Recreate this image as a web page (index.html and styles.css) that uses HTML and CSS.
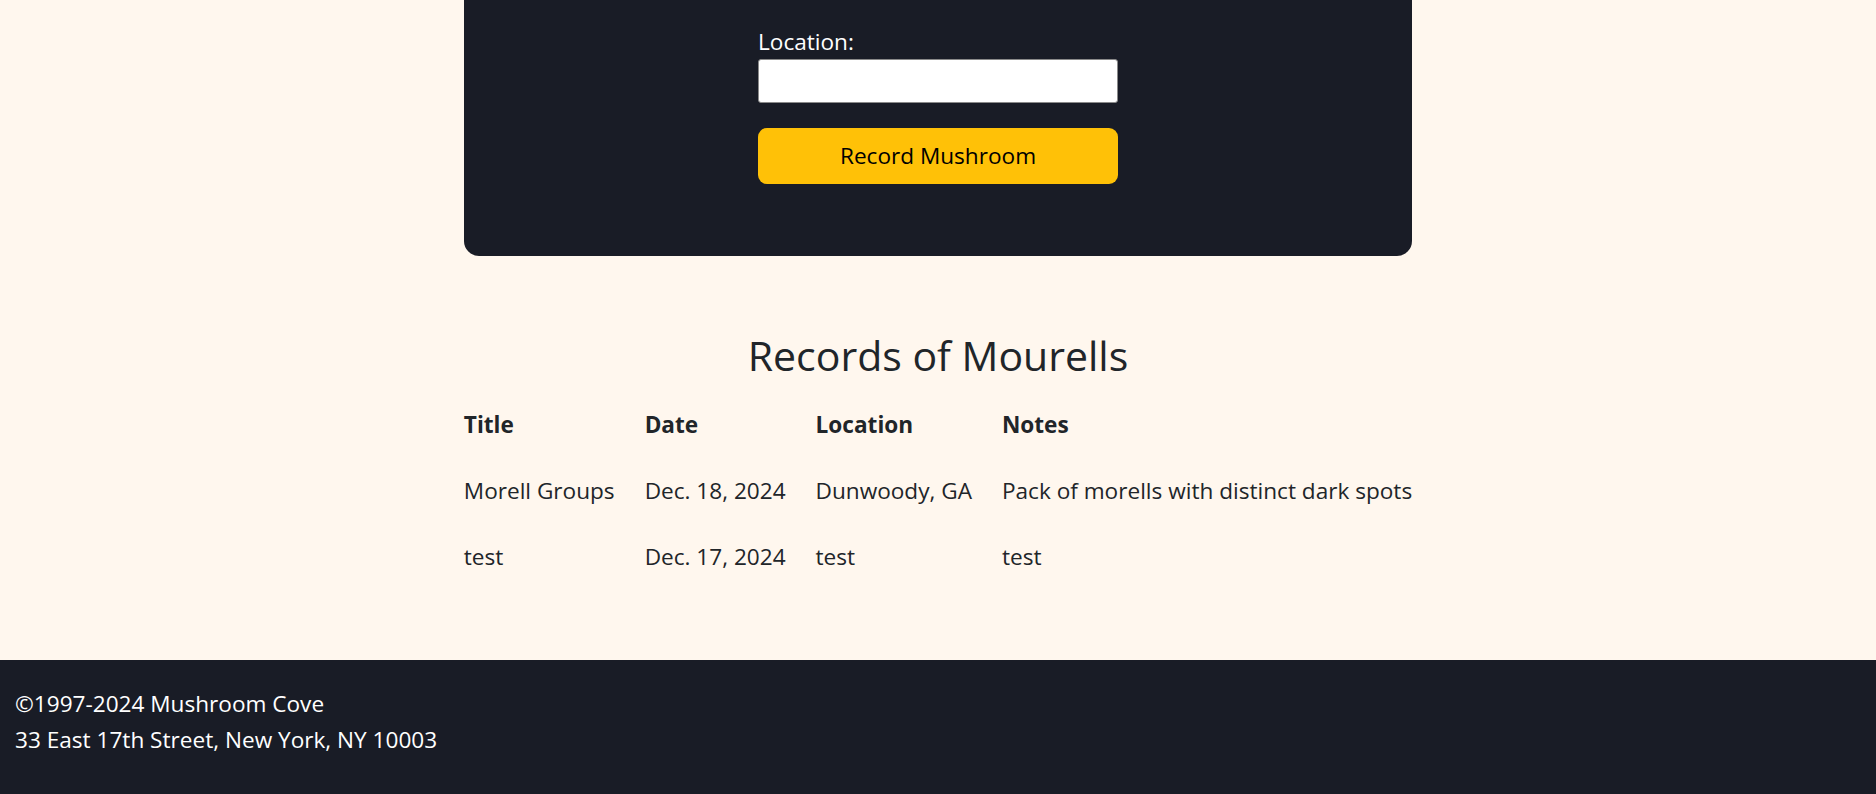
FILE: index.html
```html
<!DOCTYPE html>
<html lang="en">
<head>
<meta charset="utf-8">
<title>Mushroom Cove - Records of Mourells</title>
<link rel="stylesheet" href="styles.css">
</head>
<body>
<main class="page">
  <section class="card">
    <form class="form-col">
      <label class="field-label" for="location">Location:</label>
      <input class="field-input" type="text" id="location" name="location">
      <button class="btn-record" type="button">Record Mushroom</button>
    </form>
  </section>

  <h3 class="records-title">Records of Mourells</h3>
  <table class="records">
    <thead>
      <tr><th>Title</th><th>Date</th><th>Location</th><th>Notes</th></tr>
    </thead>
    <tbody>
      <tr><td>Morell Groups</td><td>Dec. 18, 2024</td><td>Dunwoody, GA</td><td>Pack of morells with distinct dark spots</td></tr>
      <tr><td>test</td><td>Dec. 17, 2024</td><td>test</td><td>test</td></tr>
    </tbody>
  </table>
</main>
<footer class="site-footer">
  <div>&copy;1997-2024 Mushroom Cove</div>
  <div>33 East 17th Street, New York, NY 10003</div>
</footer>
</body>
</html>
```
FILE: styles.css
```css
html, body {
  margin: 0;
  padding: 0;
}
body {
  background: #fff7ee;
  color: #212529;
  font-family: "Open Sans", "Noto Sans", sans-serif;
  font-size: 22.6px;
  line-height: 36px;
  overflow: hidden;
}
.page {
  display: flex;
  flex-direction: column;
  align-items: center;
}
.card {
  width: 948px;
  box-sizing: border-box;
  background: #191c26;
  border-radius: 0 0 15px 15px;
  padding: 24px 0 72px;
}
.form-col {
  width: 360px;
  margin: 0 auto;
  display: flex;
  flex-direction: column;
}
.field-label {
  color: #ffffff;
  line-height: 35px;
}
.field-input {
  height: 44px;
  box-sizing: border-box;
  border: 1px solid #8a8a8a;
  border-radius: 3px;
  background: #ffffff;
  font: inherit;
  padding: 0 8px;
}
.btn-record {
  margin-top: 25px;
  height: 56px;
  border: none;
  border-radius: 9px;
  background: #ffc107;
  color: #000000;
  font: inherit;
  line-height: 36px;
  cursor: pointer;
}
.records-title {
  margin: 74px 0 12px;
  font-size: 41px;
  font-weight: 500;
  line-height: 50px;
  color: #212529;
}
.records {
  border-collapse: collapse;
  margin-bottom: 70px;
}
.records th,
.records td {
  padding: 15px;
  text-align: left;
  vertical-align: top;
  white-space: nowrap;
}
.records th {
  font-weight: 700;
}
.site-footer {
  background: #191c26;
  color: #ffffff;
  padding: 26px 15px 37px;
}
```
